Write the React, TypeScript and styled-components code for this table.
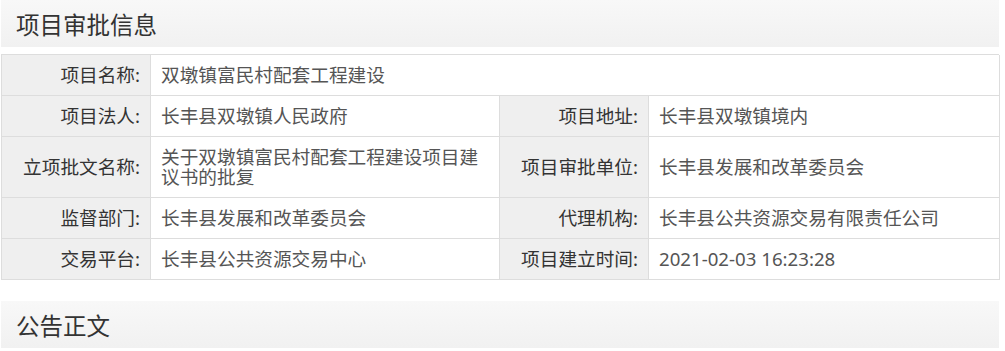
import styled, { createGlobalStyle } from 'styled-components'

const GlobalStyle = createGlobalStyle`
  body {
    margin: 0;
    background: #fff;
    font-family: "Noto Sans", "Noto Sans CJK SC", sans-serif;
  }
`

const Page = styled.div`
  width: 998px;
  margin-left: 1px;
`

const SectionHeader = styled.div`
  height: 47px;
  display: flex;
  align-items: center;
  padding-left: 15px;
  background: linear-gradient(#f8f8f8, #f1f1f1);
  font-size: 23.5px;
  color: #333;
`

const Grid = styled.div`
  margin: 7px 0 21px;
  display: grid;
  grid-template-columns: 149px 349px 149px 351px;
  border-left: 1px solid #ddd;
  border-top: 1px solid #ddd;
  font-size: 18.67px;
  line-height: 20px;
`

const Cell = styled.div<{ $span?: number }>`
  grid-column: span ${p => p.$span || 1};
  padding: 10px 10px;
  border-right: 1px solid #ddd;
  border-bottom: 1px solid #ddd;
  display: flex;
  align-items: center;
`

const Label = styled(Cell)`
  justify-content: flex-end;
  background: #efefef;
  color: #333;
  white-space: nowrap;
`

const Value = styled(Cell)`
  color: #555;
  padding-right: 20px;
`

const rows: [string, string, string?, string?][] = [
  ['项目名称:', '双墩镇富民村配套工程建设'],
  ['项目法人:', '长丰县双墩镇人民政府', '项目地址:', '长丰县双墩镇境内'],
  ['立项批文名称:', '关于双墩镇富民村配套工程建设项目建议书的批复', '项目审批单位:', '长丰县发展和改革委员会'],
  ['监督部门:', '长丰县发展和改革委员会', '代理机构:', '长丰县公共资源交易有限责任公司'],
  ['交易平台:', '长丰县公共资源交易中心', '项目建立时间:', '2021-02-03 16:23:28'],
]

export default function App() {
  return (
    <Page>
      <GlobalStyle />
      <SectionHeader>项目审批信息</SectionHeader>
      <Grid>
        {rows.map(([l1, v1, l2, v2]) =>
          l2 ? (
            [
              <Label key={l1}>{l1}</Label>,
              <Value key={l1 + 'v'}>{v1}</Value>,
              <Label key={l2}>{l2}</Label>,
              <Value key={l2 + 'v'}>{v2}</Value>,
            ]
          ) : (
            [<Label key={l1}>{l1}</Label>, <Value key={l1 + 'v'} $span={3}>{v1}</Value>]
          )
        )}
      </Grid>
      <SectionHeader>公告正文</SectionHeader>
    </Page>
  )
}
